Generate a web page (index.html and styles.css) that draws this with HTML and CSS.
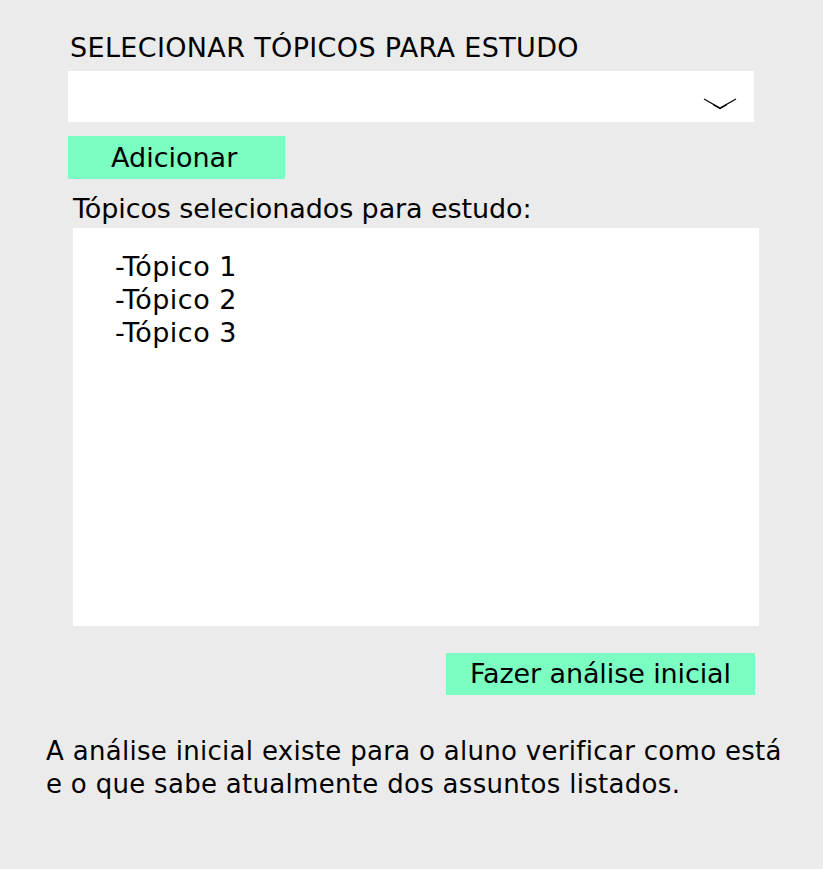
FILE: index.html
```html
<!DOCTYPE html>
<html lang="pt">
<head>
<meta charset="utf-8">
<title>Selecionar tópicos</title>
<link rel="stylesheet" href="styles.css">
</head>
<body>
<main class="page">
  <h1 class="title">SELECIONAR TÓPICOS PARA ESTUDO</h1>
  <div class="select">
    <svg class="chevron" width="34" height="14" viewBox="0 0 34 14">
      <path d="M1 2 L17 11 L33 2" fill="none" stroke="#000" stroke-width="1.2" stroke-linejoin="miter"/>
      <path d="M10 7.5 L17 11.5 L24 7.5" fill="none" stroke="#000" stroke-width="1.2"/>
    </svg>
  </div>
  <button class="btn btn-add">Adicionar</button>
  <p class="label">Tópicos selecionados para estudo:</p>
  <div class="list">
    <div class="item">-Tópico 1</div>
    <div class="item">-Tópico 2</div>
    <div class="item">-Tópico 3</div>
  </div>
  <div class="actions">
    <button class="btn btn-analyse">Fazer análise inicial</button>
  </div>
  <p class="note">A análise inicial existe para o aluno verificar como está<br>e o que sabe atualmente dos assuntos listados.</p>
</main>
</body>
</html>
```

FILE: styles.css
```css
html, body {
  margin: 0;
  padding: 0;
  background: #ebebeb;
}
body {
  font-family: "DejaVu Sans", Verdana, sans-serif;
  color: #000;
  width: 823px;
  height: 869px;
  overflow: hidden;
}
.page {
  padding: 31px 0 0 68px;
  width: 692px;
}
.title {
  margin: 0 0 0 2px;
  font-size: 27px;
  font-weight: normal;
  line-height: 34px;
  letter-spacing: 0.35px;
  white-space: nowrap;
}
.select {
  margin-top: 6px;
  height: 51px;
  width: 686px;
  background: #fff;
  display: flex;
  justify-content: flex-end;
  align-items: center;
}
.chevron {
  margin: 14px 17px 0 0;
}
.btn {
  border: none;
  background: #7bfec1;
  font-family: inherit;
  font-size: 27px;
  color: #000;
  padding: 0;
  display: block;
}
.btn-add {
  margin-top: 14px;
  width: 217px;
  height: 43px;
  line-height: 43px;
  text-align: left;
  padding-left: 43px;
}
.label {
  margin: 13px 0 0 5px;
  font-size: 27px;
  line-height: 33px;
  letter-spacing: -0.1px;
  white-space: nowrap;
}
.list {
  margin: 3px 0 0 5px;
  width: 686px;
  height: 398px;
  background: #fff;
  padding: 22px 0 0 42px;
  box-sizing: border-box;
}
.item {
  font-size: 27px;
  line-height: 33px;
  letter-spacing: 0.5px;
}
.actions {
  display: flex;
  justify-content: flex-end;
  width: 687px;
  margin-top: 27px;
}
.btn-analyse {
  width: 309px;
  height: 42px;
  line-height: 42px;
  text-align: left;
  padding-left: 24px;
  letter-spacing: -0.1px;
}
.note {
  margin: 40px 0 0 -22px;
  font-size: 26px;
  line-height: 33px;
  letter-spacing: 0.3px;
  width: 780px;
  white-space: nowrap;
}
```
